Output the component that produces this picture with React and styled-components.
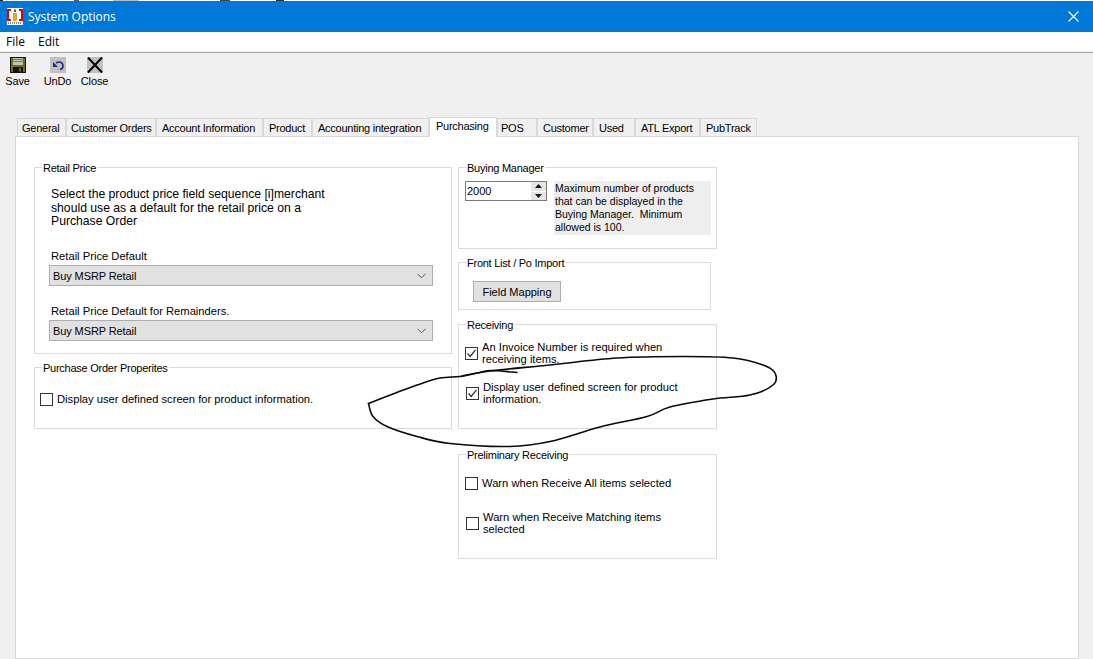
import React from "react";
import styled, { createGlobalStyle } from "styled-components";

const GlobalStyle = createGlobalStyle`
  html, body {
    margin: 0;
    height: 100%;
    overflow: hidden;
  }
  body {
    background: #f0f0f0;
    font-family: "Liberation Sans", Arial, sans-serif;
    font-size: 11px;
    color: #000;
  }
`;

const Page = styled.div`
  position: relative;
  width: 1093px;
  height: 659px;
  overflow: hidden;
  display: flex;
  flex-direction: column;
`;

// remains of the window behind, one pixel is all that shows
const TopStrip = styled.div`
  height: 1px;
  background: linear-gradient(
    to right,
    #222 0 3px,
    #fff 3px 74px,
    #555 74px 79px,
    #fff 79px 113px,
    #bbb 113px 139px,
    #fff 139px 220px,
    #444 220px 230px,
    #fff 230px 276px,
    #333 276px 284px,
    #fff 284px
  );
`;

const TitleBar = styled.div`
  height: 31px;
  background: #0078d7;
  color: #fff;
  display: flex;
  align-items: center;
  padding: 0 14px 0 7px;
  font-family: "Open Sans", sans-serif;
  font-size: 12px;
`;

const TitleText = styled.span`
  margin-left: 5px;
  flex: 1;
`;

const MenuBar = styled.div`
  height: 19px;
  background: #fff;
  display: flex;
  align-items: center;
  gap: 13px;
  padding-left: 6px;
  font-family: "Open Sans", sans-serif;
  font-size: 12px;
`;

const Rule = styled.div`
  height: 1px;
  margin-top: 1px;
  background: #a0a0a0;
`;

const Toolbar = styled.div`
  height: 64px;
  padding-top: 4px;
  box-sizing: border-box;
  display: flex;
  align-items: flex-start;
`;

const ToolButton = styled.div`
  width: ${(p) => p.$w}px;
  display: flex;
  flex-direction: column;
  align-items: center;
  gap: 2px;
  letter-spacing: -0.1px;
`;

const TabStrip = styled.div`
  height: 19px;
  padding-left: 17px;
  display: flex;
  align-items: flex-end;
  position: relative;
  z-index: 1;
`;

const Tab = styled.div`
  width: ${(p) => p.$w}px;
  height: ${(p) => (p.$active ? 20 : 18)}px;
  box-sizing: border-box;
  flex: none;
  border: 1px solid #d9d9d9;
  border-bottom: none;
  background: ${(p) => (p.$active ? "#fff" : "#f0f0f0")};
  display: flex;
  align-items: center;
  padding-left: ${(p) => p.$pad}px;
  white-space: nowrap;
  letter-spacing: -0.25px;
  margin-bottom: ${(p) => (p.$active ? -1 : 0)}px;
  padding-bottom: ${(p) => (p.$active ? 3 : 0)}px;
`;

const TabPanel = styled.div`
  flex: 1;
  margin: 0 14px 0 15px;
  background: #fff;
  border: 1px solid #d9d9d9;
  padding: 30px 0 0 18px;
  display: flex;
  gap: 6px;
  align-items: flex-start;
`;

const Column = styled.div`
  width: ${(p) => p.$w}px;
  display: flex;
  flex-direction: column;
  flex: none;
`;

const Group = styled.div`
  position: relative;
  box-sizing: border-box;
  width: ${(p) => p.$w || "100%"};
  height: ${(p) => p.$h}px;
  margin-top: ${(p) => p.$mt || 0}px;
  border: 1px solid #dcdcdc;
`;

const Legend = styled.span`
  position: absolute;
  top: -7px;
  left: 7px;
  padding: 0 1px;
  line-height: 14px;
  letter-spacing: -0.25px;
  background: #fff;
  white-space: nowrap;
`;

const Instructions = styled.div`
  margin: 20px 0 0 16px;
  line-height: 13.5px;
  font-size: 12.2px;
`;

const FieldLabel = styled.div`
  margin: ${(p) => p.$mt}px 0 0 16px;
  line-height: 14px;
  font-size: 11.2px;
`;

const Select = styled.div`
  box-sizing: border-box;
  width: 384px;
  height: 21px;
  margin: 2px 0 0 14px;
  padding: 0 6px 0 3px;
  background: #e1e1e1;
  border: 1px solid #adadad;
  letter-spacing: -0.1px;
  display: flex;
  align-items: center;
  justify-content: space-between;
`;

const BuyingRow = styled.div`
  display: flex;
  padding: 13px 5px 0 6px;
  gap: 7px;
`;

const Spinner = styled.div`
  box-sizing: border-box;
  width: 82px;
  height: 20px;
  flex: none;
  border: 1px solid #7a7a7a;
  display: flex;
  justify-content: space-between;
  padding-left: 1px;
  line-height: 18px;
`;

const SpinnerButtons = styled.div`
  width: 15px;
  display: flex;
  flex-direction: column;
  gap: 1px;
`;

const SpinButton = styled.div`
  flex: 1;
  background: #e6e6e6;
  display: flex;
  align-items: center;
  justify-content: center;
`;

const Description = styled.div`
  flex: 1;
  height: 54px;
  box-sizing: border-box;
  padding: 1px 0 0 1px;
  background: #eeeeee;
  line-height: 13px;
  font-size: 10.5px;
`;

const MappingButton = styled.div`
  box-sizing: border-box;
  width: 88px;
  height: 21px;
  margin: 18px 0 0 14px;
  background: #e1e1e1;
  border: 1px solid #adadad;
  display: flex;
  align-items: center;
  justify-content: center;
`;

const CheckRow = styled.div`
  display: flex;
  align-items: flex-start;
  gap: 4px;
  margin: ${(p) => p.$mt}px 0 0 ${(p) => p.$ml}px;
  line-height: 12px;
`;

const Box = styled.div`
  box-sizing: border-box;
  width: 13px;
  height: 13px;
  flex: none;
  margin-top: ${(p) => p.$mt || 0}px;
  background: #fff;
  border: 1px solid #333;
  display: flex;
  align-items: center;
  justify-content: center;
`;

const CheckText = styled.div`
  font-size: 11.2px;
`;

const Scribble = styled.svg`
  position: absolute;
  inset: 0;
  pointer-events: none;
`;

const LogoIcon = () => (
  <svg width="16" height="17" viewBox="0 0 16 17">
    <rect width="16" height="17" fill="#fff" />
    <path d="M4 2H1v10h3M12 2h3v10h-3" fill="none" stroke="#e00000" strokeWidth="2" />
    <rect x="6.5" y="5.5" width="3" height="7" fill="#f0b400" stroke="#8a6a00" strokeWidth="0.5" />
    <rect x="7" y="1.5" width="2" height="2.5" fill="#555" />
    <path d="M1 15h14" stroke="#888" strokeWidth="2" strokeDasharray="1 1" />
  </svg>
);

const SaveIcon = () => (
  <svg width="16" height="16" viewBox="0 0 16 16">
    <rect x="0.5" y="0.5" width="15" height="15" fill="#6e6e14" stroke="#111" />
    <rect x="3" y="1" width="10" height="7" fill="#c4c4b4" />
    <path d="M3 2.500h10M3 4.500h10" stroke="#777" />
    <rect x="3" y="10" width="10" height="5.500" fill="#111" />
    <rect x="9" y="11" width="2" height="3.500" fill="#6e6e14" />
  </svg>
);

const UndoIcon = () => (
  <svg width="16" height="16" viewBox="0 0 16 16">
    <rect width="16" height="16" fill="#c0c0c0" />
    <path d="M6 6c3-2 7-1 7 3c0 1.500-1 3-3 3.500" fill="none" stroke="#1a2a80" strokeWidth="1.6" />
    <path d="M3 5l5 5H3z" fill="#1a2a80" />
  </svg>
);

const CloseIcon = () => (
  <svg width="16" height="16" viewBox="0 0 16 16">
    <rect width="16" height="16" fill="#c0c0c0" />
    <path d="M1 0.500l14 15M15 0.500L1 15.500" stroke="#000" strokeWidth="2" />
  </svg>
);

const Chevron = () => (
  <svg width="9" height="6" viewBox="0 0 9 6">
    <path d="M0.500 0.800L4.500 4.800L8.500 0.800" fill="none" stroke="#555" />
  </svg>
);

const CloseX = () => (
  <svg width="11" height="11" viewBox="0 0 11 11">
    <path d="M0.500 0.500L10.500 10.500M10.500 0.500L0.500 10.500" stroke="#fff" strokeWidth="1.1" />
  </svg>
);

const Check = () => (
  <svg width="11" height="11" viewBox="0 0 11 11">
    <path d="M1.500 5.500L4.200 8.500L9.500 1.800" fill="none" stroke="#333" strokeWidth="1.3" />
  </svg>
);

const Arrow = ({ up }) => (
  <svg width="7" height="4" viewBox="0 0 7 4">
    <path d={up ? "M3.500 0L7 4H0z" : "M0 0h7L3.500 4z"} fill="#111" />
  </svg>
);

const CheckBox = ({ checked, mt }) => (
  <Box $mt={mt}>{checked && <Check />}</Box>
);

const tabs = [
  ["General", 49, 4],
  ["Customer Orders", 90, 4],
  ["Account Information", 107, 5],
  ["Product", 49, 5],
  ["Accounting integration", 117, 5],
  ["Purchasing", 68, 6, true],
  ["POS", 40, 3],
  ["Customer", 56, 5],
  ["Used", 42, 5],
  ["ATL Export", 65, 5],
  ["PubTrack", 57, 5],
];

// the hand-drawn loop round the second Receiving checkbox, broken at its sharp left corner
const loopTop = [
  [517, 372.5], [490, 370.5], [477, 373], [460, 376.5], [440, 378], [417, 385],
  [393, 394], [368.5, 403.5],
];
const loopRest = [
  [368.5, 403.5], [373, 416.5], [387, 426.5], [417, 436.5], [450, 443.5],
  [510, 446.5], [550, 441.5], [600, 427], [647, 416.5], [670, 407], [713, 399],
  [750, 395], [773, 385], [775, 373], [763, 365], [733, 358], [683, 356.5],
  [617, 358], [550, 365], [490, 371], [462, 376],
];

const smooth = (pts) => {
  let d = `M${pts[0][0]} ${pts[0][1]}`;
  for (let i = 0; i < pts.length - 1; i++) {
    const p0 = pts[i - 1] || pts[i];
    const p1 = pts[i];
    const p2 = pts[i + 1];
    const p3 = pts[i + 2] || p2;
    const c1 = [p1[0] + (p2[0] - p0[0]) / 6, p1[1] + (p2[1] - p0[1]) / 6];
    const c2 = [p2[0] - (p3[0] - p1[0]) / 6, p2[1] - (p3[1] - p1[1]) / 6];
    d += ` C${c1[0]} ${c1[1]} ${c2[0]} ${c2[1]} ${p2[0]} ${p2[1]}`;
  }
  return d;
};

const App = () => {
  return (
    <Page>
      <GlobalStyle />
      <TopStrip />
      <TitleBar>
        <LogoIcon />
        <TitleText>System Options</TitleText>
        <CloseX />
      </TitleBar>
      <MenuBar>
        <span>File</span>
        <span>Edit</span>
      </MenuBar>
      <Rule />
      <Toolbar>
        <ToolButton $w={35}>
          <SaveIcon />
          <span>Save</span>
        </ToolButton>
        <ToolButton $w={45}>
          <UndoIcon />
          <span>UnDo</span>
        </ToolButton>
        <ToolButton $w={29}>
          <CloseIcon />
          <span>Close</span>
        </ToolButton>
      </Toolbar>
      <TabStrip>
        {tabs.map(([name, w, pad, active]) => (
          <Tab key={name} $w={w} $pad={pad} $active={active}>
            {name}
          </Tab>
        ))}
      </TabStrip>
      <TabPanel>
        <Column $w={418}>
          <Group $h={187}>
            <Legend>Retail Price</Legend>
            <Instructions>
              Select the product price field sequence [i]merchant
              <br />
              should use as a default for the retail price on a
              <br />
              Purchase Order
            </Instructions>
            <FieldLabel $mt={20.5}>Retail Price Default</FieldLabel>
            <Select>
              Buy MSRP Retail
              <Chevron />
            </Select>
            <FieldLabel $mt={18}>Retail Price Default for Remainders.</FieldLabel>
            <Select>
              Buy MSRP Retail
              <Chevron />
            </Select>
          </Group>
          <Group $h={62} $mt={13}>
            <Legend>Purchase Order Properites</Legend>
            <CheckRow $mt={25} $ml={5}>
              <CheckBox />
              <CheckText>Display user defined screen for product information.</CheckText>
            </CheckRow>
          </Group>
        </Column>
        <Column $w={259}>
          <Group $h={82}>
            <Legend>Buying Manager</Legend>
            <BuyingRow>
              <Spinner>
                2000
                <SpinnerButtons>
                  <SpinButton>
                    <Arrow up />
                  </SpinButton>
                  <SpinButton>
                    <Arrow />
                  </SpinButton>
                </SpinnerButtons>
              </Spinner>
              <Description>
                Maximum number of products
                <br />
                that can be displayed in the
                <br />
                Buying Manager.&nbsp; Minimum
                <br />
                allowed is 100.
              </Description>
            </BuyingRow>
          </Group>
          <Group $h={48} $w="253px" $mt={13}>
            <Legend>Front List / Po Import</Legend>
            <MappingButton>Field Mapping</MappingButton>
          </Group>
          <Group $h={105} $mt={14}>
            <Legend>Receiving</Legend>
            <CheckRow $mt={16} $ml={6}>
              <CheckBox checked mt={6} />
              <CheckText>
                An Invoice Number is required when
                <br />
                receiving items.
              </CheckText>
            </CheckRow>
            <CheckRow $mt={16} $ml={7}>
              <CheckBox checked mt={6} />
              <CheckText>
                Display user defined screen for product
                <br />
                information.
              </CheckText>
            </CheckRow>
          </Group>
          <Group $h={105} $mt={25}>
            <Legend>Preliminary Receiving</Legend>
            <CheckRow $mt={22} $ml={6}>
              <CheckBox />
              <CheckText>Warn when Receive All items selected</CheckText>
            </CheckRow>
            <CheckRow $mt={21} $ml={7}>
              <CheckBox mt={6} />
              <CheckText>
                Warn when Receive Matching items
                <br />
                selected
              </CheckText>
            </CheckRow>
          </Group>
        </Column>
      </TabPanel>
      <Scribble width="1093" height="659" viewBox="0 0 1093 659">
        <path d={smooth(loopTop)} fill="none" stroke="#0a0a0a" strokeWidth="1.6" strokeLinecap="round" />
        <path d={smooth(loopRest)} fill="none" stroke="#0a0a0a" strokeWidth="1.6" strokeLinecap="round" />
      </Scribble>
    </Page>
  );
};

export default App;
